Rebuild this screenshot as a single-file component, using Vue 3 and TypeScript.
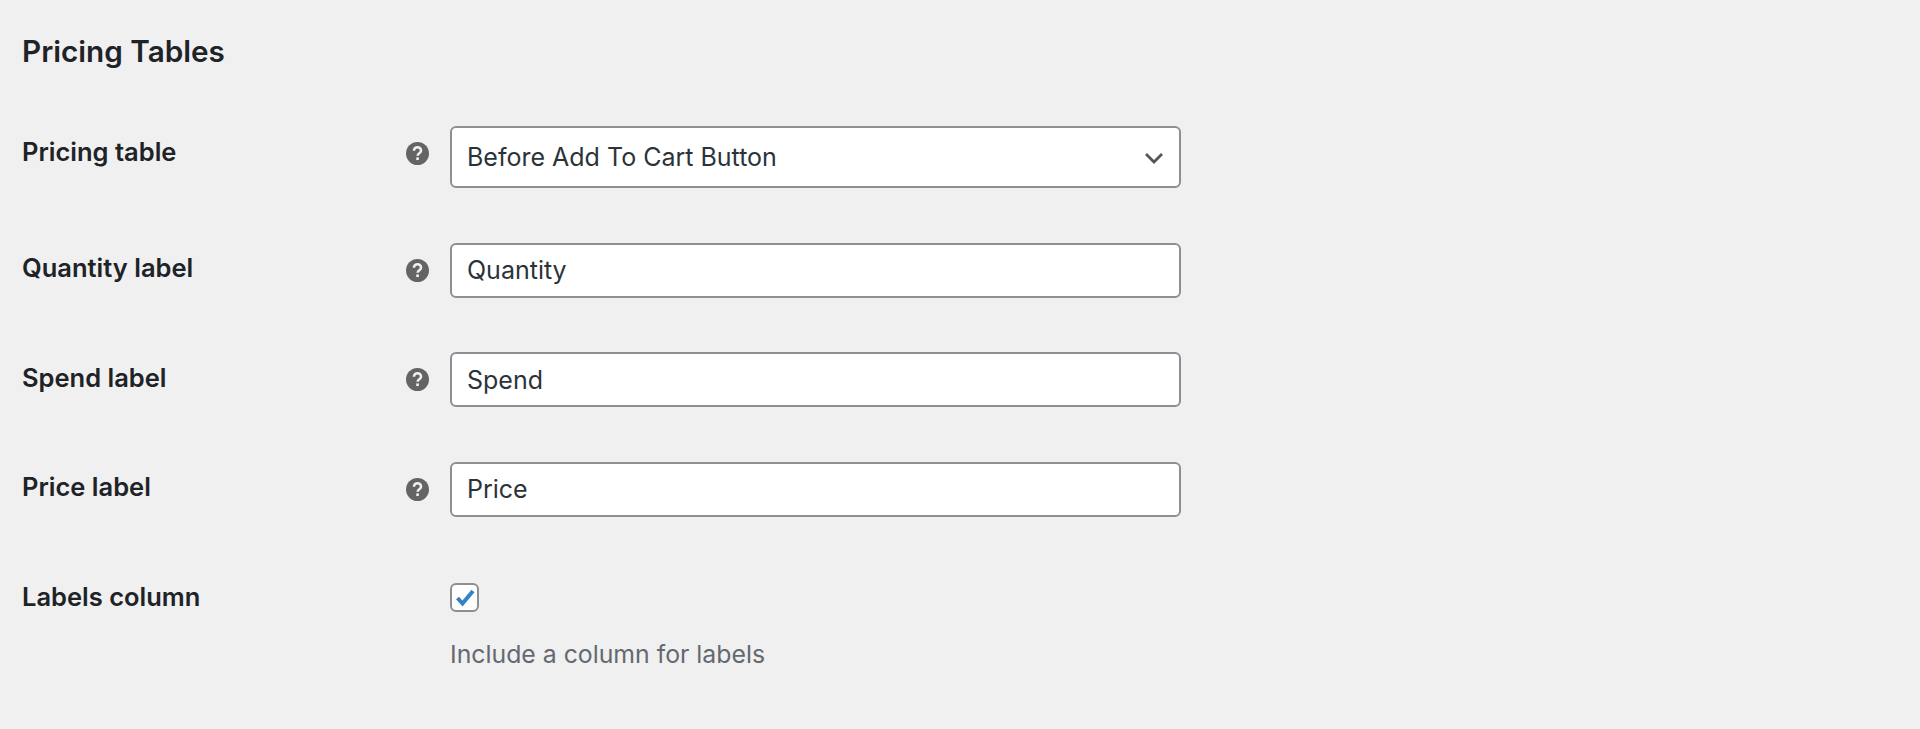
<script setup lang="ts">
import { ref } from 'vue';

const rows = ref([
  { label: 'Quantity label', value: 'Quantity' },
  { label: 'Spend label', value: 'Spend' },
  { label: 'Price label', value: 'Price' },
]);
const placement = ref('before');
const labelsColumn = ref(true);
</script>

<template>
  <div class="page">
    <h2 class="title">Pricing Tables</h2>
    <div class="form">
      <div class="row row-select">
        <span class="label label-select">Pricing table</span>
        <span class="help help-select">
          <svg viewBox="0 0 20 20" width="23" height="23">
            <circle cx="10" cy="10" r="10" fill="#646464" />
            <path d="M6.9 7.6a3.1 3.1 0 0 1 6.2 0c0 2.2-3 2.3-3 4.4" fill="none" stroke="#f0f0f1" stroke-width="2.2" />
            <rect x="8.9" y="13.4" width="2.3" height="2.3" fill="#f0f0f1" />
          </svg>
        </span>
        <div class="select-wrap">
          <select v-model="placement" class="control select">
            <option value="before">Before Add To Cart Button</option>
          </select>
          <svg class="chevron" viewBox="0 0 20 12" width="20" height="12">
            <path d="M2 2l8 8 8-8" fill="none" stroke="#50575e" stroke-width="2.8" />
          </svg>
        </div>
      </div>

      <div v-for="row in rows" :key="row.label" class="row">
        <span class="label">{{ row.label }}</span>
        <span class="help">
          <svg viewBox="0 0 20 20" width="23" height="23">
            <circle cx="10" cy="10" r="10" fill="#646464" />
            <path d="M6.9 7.6a3.1 3.1 0 0 1 6.2 0c0 2.2-3 2.3-3 4.4" fill="none" stroke="#f0f0f1" stroke-width="2.2" />
            <rect x="8.9" y="13.4" width="2.3" height="2.3" fill="#f0f0f1" />
          </svg>
        </span>
        <input v-model="row.value" class="control" type="text" />
      </div>

      <div class="row row-check">
        <span class="label label-check">Labels column</span>
        <span></span>
        <div class="check-col">
          <label class="check">
            <input v-model="labelsColumn" type="checkbox" />
            <svg viewBox="0 0 24 24" width="24" height="24">
              <path d="M4.5 13l5 5.5L20 6" fill="none" stroke="#3582c4" stroke-width="4" />
            </svg>
          </label>
          <p class="desc">Include a column for labels</p>
        </div>
      </div>
    </div>
  </div>
</template>

<style>
html,
body {
  background: #f0f0f0;
}
</style>

<style scoped>
.page {
  height: 729px;
  overflow: hidden;
  box-sizing: border-box;
  padding: 33px 22px 0;
  background: #f0f0f0;
  font-family: Inter, 'Liberation Sans', sans-serif;
  color: #1d2327;
}
.title {
  margin: 0;
  font-size: 29.7px;
  line-height: 36px;
  font-weight: 600;
}
.form {
  display: flex;
  flex-direction: column;
  gap: 54.5px;
  margin-top: 57px;
}
.row {
  display: grid;
  grid-template-columns: 384px 44px 731px;
  align-items: center;
}
.label {
  font-size: 25.5px;
  font-weight: 600;
  line-height: 30px;
  margin-top: -4px;
}
.label-select {
  margin-top: -10px;
}
.help {
  display: flex;
  height: 23px;
}
.help-select {
  margin-top: -8px;
}
.control {
  box-sizing: border-box;
  width: 731px;
  height: 55px;
  margin: 0;
  padding: 0 15px;
  background: #fff;
  border: 2px solid #8c8f94;
  border-radius: 6px;
  font-family: inherit;
  font-size: 25px;
  color: #2c3338;
  outline: none;
}
.select-wrap {
  position: relative;
  width: 731px;
}
.select {
  display: block;
  height: 62px;
  appearance: none;
}
.chevron {
  position: absolute;
  right: 17px;
  top: 26px;
}
.row-check {
  align-items: start;
  margin-top: 12px;
}
.label-check {
  margin-top: -1px;
}
.check-col {
  display: flex;
  flex-direction: column;
  align-items: flex-start;
}
.check {
  position: relative;
  display: block;
  width: 29px;
  height: 29px;
}
.check input {
  display: block;
  box-sizing: border-box;
  width: 29px;
  height: 29px;
  margin: 0;
  appearance: none;
  background: #fff;
  border: 2px solid #8c8f94;
  border-radius: 6px;
}
.check svg {
  position: absolute;
  left: 3px;
  top: 2px;
}
.desc {
  margin: 27px 0 0;
  font-size: 24.8px;
  line-height: 30px;
  color: #646970;
}
</style>
